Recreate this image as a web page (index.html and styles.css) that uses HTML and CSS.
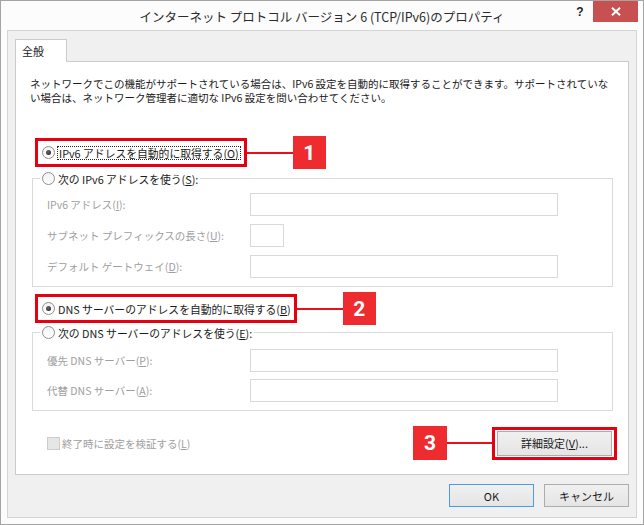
FILE: index.html
```html
<!DOCTYPE html>
<html lang="ja">
<head>
<meta charset="utf-8">
<title>IPv6 プロパティ</title>
<link rel="stylesheet" href="styles.css">
</head>
<body>
<div class="window">
  <div class="titlebar">
    <div></div>
    <div class="title">インターネット プロトコル バージョン 6 (TCP/IPv6)のプロパティ</div>
    <div class="controls">
      <span class="help">?</span>
      <span class="close"><svg width="10" height="9" viewBox="0 0 10 9"><path d="M1 0.8 L9 8.2 M9 0.8 L1 8.2" stroke="#fff" stroke-width="2" fill="none"/></svg></span>
    </div>
  </div>
  <div class="client">
    <div class="tabs"><span class="tab">全般</span></div>
    <div class="panel">
      <p class="desc">ネットワークでこの機能がサポートされている場合は、IPv6 設定を自動的に取得することができます。サポートされていな<br>い場合は、ネットワーク管理者に適切な IPv6 設定を問い合わせてください。</p>

      <div class="callout c1">
        <div class="redbox">
          <span class="radio-row"><span class="radio checked"></span><span class="focus">IPv6 アドレスを自動的に取得する(<u>O</u>)</span></span>
        </div>
        <span class="connector"></span><span class="badge">1</span>
      </div>

      <fieldset class="group g1">
        <legend><span class="radio-row"><span class="radio"></span><span class="rtext">次の IPv6 アドレスを使う(<u>S</u>):</span></span></legend>
        <div class="fields gap8">
          <span class="flabel">IPv6 アドレス(<u>I</u>):</span><span class="input"></span>
          <span class="flabel">サブネット プレフィックスの長さ(<u>U</u>):</span><span class="input small"></span>
          <span class="flabel">デフォルト ゲートウェイ(<u>D</u>):</span><span class="input"></span>
        </div>
      </fieldset>

      <div class="callout c2">
        <div class="redbox">
          <span class="radio-row"><span class="radio checked"></span><span class="rtext">DNS サーバーのアドレスを自動的に取得する(<u>B</u>)</span></span>
        </div>
        <span class="connector"></span><span class="badge">2</span>
      </div>

      <fieldset class="group g2">
        <legend><span class="radio-row"><span class="radio"></span><span class="rtext">次の DNS サーバーのアドレスを使う(<u>E</u>):</span></span></legend>
        <div class="fields gap7">
          <span class="flabel">優先 DNS サーバー(<u>P</u>):</span><span class="input"></span>
          <span class="flabel">代替 DNS サーバー(<u>A</u>):</span><span class="input"></span>
        </div>
      </fieldset>

      <div class="bottomrow">
        <span class="check-row"><span class="checkbox"></span><span class="ctext">終了時に設定を検証する(<u>L</u>)</span></span>
        <span class="badge b3">3</span><span class="connector c3"></span>
        <div class="redbox rb3"><span class="btn adv">詳細設定(<u>V</u>)...</span></div>
      </div>
    </div>
    <div class="buttons">
      <span class="btn ok">OK</span>
      <span class="btn">キャンセル</span>
    </div>
  </div>
</div>
</body>
</html>
```

FILE: styles.css
```css
* { box-sizing: border-box; }
html, body { margin: 0; padding: 0; background: #ffffff; }
body {
  font-family: "Noto Sans CJK JP", "Noto Sans", sans-serif;
  font-size: 10.5px;
  color: #1a1a1a;
}
u { text-decoration: underline; text-underline-offset: 1px; }

.window {
  width: 644px;
  height: 525px;
  border: 1px solid #a4a4a4;
  background: #fcfcfc;
  display: flex;
  flex-direction: column;
}

.titlebar {
  height: 29px;
  display: grid;
  grid-template-columns: 1fr auto 1fr;
}
.title {
  align-self: center;
  font-size: 12.5px;
  color: #2b2b2b;
  white-space: nowrap;
  padding-top: 1px;
}
.controls {
  display: flex;
  justify-content: flex-end;
  align-items: flex-start;
  padding-right: 5px;
}
.help {
  width: 26px;
  height: 21px;
  display: flex;
  align-items: center;
  justify-content: center;
  font-family: "Liberation Sans", sans-serif;
  font-weight: bold;
  font-size: 12px;
  color: #222;
}
.close {
  width: 45px;
  height: 21px;
  background: #c75050;
  display: flex;
  align-items: center;
  justify-content: center;
}

.client {
  flex: 1;
  margin: 0 6px 6px;
  border: 1px solid #d4d4d4;
  background: #f0f0f0;
  padding: 8px 7px 10px;
  display: flex;
  flex-direction: column;
}

.tabs { display: flex; }
.tab {
  position: relative;
  z-index: 1;
  width: 52px;
  height: 23px;
  margin-bottom: -1px;
  border: 1px solid #cbcbcb;
  border-bottom: none;
  background: #fff;
  padding: 3px 0 0 6px;
  font-size: 11px;
}

.panel {
  flex: 1;
  border: 1px solid #cbcbcb;
  background: #fff;
  padding: 15px 11px 0 14px;
  display: flex;
  flex-direction: column;
}

.desc {
  margin: 0;
  line-height: 14px;
  white-space: nowrap;
}

.callout {
  display: flex;
  align-items: center;
  margin-left: 5px;
}
.c1 { margin-top: 31px; }
.c2 { margin-top: 5px; }

.redbox {
  border: 3px solid #e60012;
  padding: 2px 3px 2px 4px;
  background: #fff;
}
.connector {
  width: 46px;
  height: 2px;
  background: #e8101c;
}
.badge {
  width: 33px;
  height: 33px;
  background: #ee2b2e;
  color: #fff;
  font-family: Roboto, "Liberation Sans", sans-serif;
  font-weight: 700;
  font-size: 21px;
  display: flex;
  align-items: center;
  justify-content: center;
}

.radio-row {
  display: flex;
  align-items: center;
  height: 19px;
  white-space: nowrap;
  font-size: 10.8px;
}
.radio {
  position: relative;
  flex: none;
  width: 13px;
  height: 13px;
  border-radius: 50%;
  border: 1px solid #8e8e8e;
  background: linear-gradient(#f2f2f2, #ffffff);
  margin-right: 2px;
}
.radio.checked::after {
  content: "";
  position: absolute;
  left: 3px;
  top: 3px;
  width: 5px;
  height: 5px;
  border-radius: 50%;
  background: radial-gradient(circle at 40% 35%, #6a6a6a, #1b1b1b);
}
.focus {
  border: 1px dotted #222;
  padding: 0 1px;
  line-height: 12px;
}
.rtext { padding-left: 1px; }

.group {
  margin: 0 4px 0 2px;
  border: 1px solid #dadada;
  padding: 5px 0 8px 7px;
  min-width: 0;
}
.g2 { margin-top: -2px; padding-top: 7px; }
.group legend {
  padding: 0 2px;
  margin: 0;
}

.fields {
  margin-left: 7px;
  display: grid;
  grid-template-columns: 203px 308px;
  align-items: center;
}
.gap8 { row-gap: 8px; }
.gap7 { row-gap: 7px; }
.flabel {
  color: #9e9e9e;
  white-space: nowrap;
}
.input {
  height: 23px;
  border: 1px solid #d9d9d9;
  background: #fff;
}
.input.small { width: 34px; }

.bottomrow {
  margin-top: 15px;
  display: flex;
  align-items: center;
}
.check-row {
  display: flex;
  align-items: center;
  margin-left: 17px;
  margin-right: auto;
  color: #9e9e9e;
}
.checkbox {
  width: 13px;
  height: 13px;
  border: 1px solid #cdcdcd;
  background: #e6e6e6;
  margin-right: 2px;
}
.badge.b3 { width: 34px; height: 34px; }
.connector.c3 { width: 45px; }
.rb3 { padding: 1px 2px; }

.btn {
  width: 85px;
  height: 23px;
  border: 1px solid #adadad;
  background: linear-gradient(#f0f0f0, #e5e5e5);
  display: flex;
  align-items: center;
  justify-content: center;
  color: #1a1a1a;
  font-size: 11px;
}
.btn.adv { width: 115px; height: 25px; }
.btn.ok { border-color: #4b9be6; }

.buttons {
  margin-top: 9px;
  display: flex;
  justify-content: flex-end;
  gap: 10px;
}
```
